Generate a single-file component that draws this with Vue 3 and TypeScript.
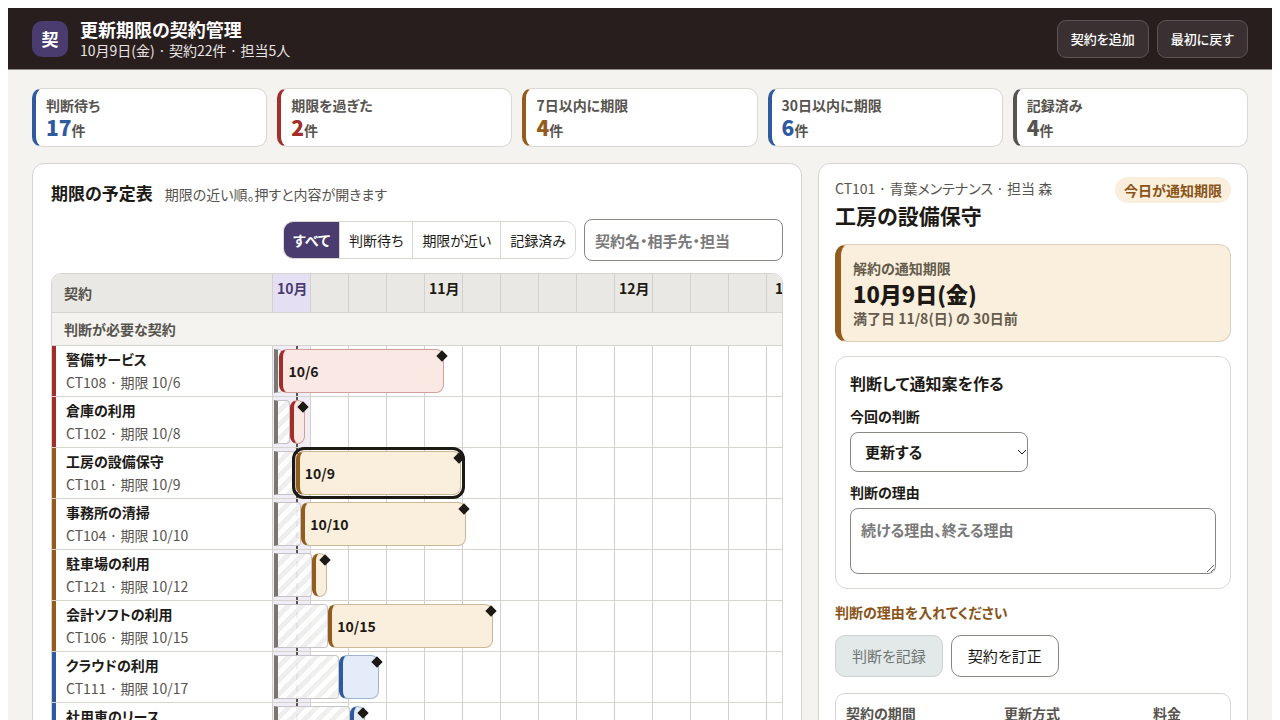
<script setup lang="ts">
import { ref, computed } from 'vue'

type Tone = 'blue' | 'red' | 'amber' | 'gray'

interface Contract {
  id: string
  name: string
  due: string
  start: number
  days: number
  tone: Tone
}

const DAY = 38 / 7

const stats: { label: string; count: number; tone: Tone }[] = [
  { label: '判断待ち', count: 17, tone: 'blue' },
  { label: '期限を過ぎた', count: 2, tone: 'red' },
  { label: '7日以内に期限', count: 4, tone: 'amber' },
  { label: '30日以内に期限', count: 6, tone: 'blue' },
  { label: '記録済み', count: 4, tone: 'gray' },
]

const filters = ['すべて', '判断待ち', '期限が近い', '記録済み']
const filter = ref('すべて')
const query = ref('')

// One entry per week, labelled where a new month begins.
const weeks = ['10月', '', '', '', '11月', '', '', '', '', '12月', '', '', '', '1月']

const contracts: Contract[] = [
  { id: 'CT108', name: '警備サービス', due: '10/6', start: 1, days: 30, tone: 'red' },
  { id: 'CT102', name: '倉庫の利用', due: '10/8', start: 3, days: 2, tone: 'red' },
  { id: 'CT101', name: '工房の設備保守', due: '10/9', start: 4, days: 30, tone: 'amber' },
  { id: 'CT104', name: '事務所の清掃', due: '10/10', start: 5, days: 30, tone: 'amber' },
  { id: 'CT121', name: '駐車場の利用', due: '10/12', start: 7, days: 1, tone: 'amber' },
  { id: 'CT106', name: '会計ソフトの利用', due: '10/15', start: 10, days: 30, tone: 'amber' },
  { id: 'CT111', name: 'クラウドの利用', due: '10/17', start: 12, days: 7, tone: 'blue' },
  { id: 'CT115', name: '社用車のリース', due: '10/19', start: 14, days: 1, tone: 'blue' },
]

const selected = ref('CT101')
const decision = ref('更新する')
const reason = ref('')

const shown = computed(() => contracts.filter((c) => (c.id + c.name).includes(query.value)))

function barStyle(c: Contract) {
  return { left: `${2 + c.start * DAY}px`, width: `${c.days * DAY + 2}px` }
}
function leadStyle(c: Contract) {
  return { width: `${c.start * DAY}px` }
}
</script>

<template>
  <div class="page">
    <header class="top">
      <div class="logo">契</div>
      <div class="brand">
        <h1>更新期限の契約管理</h1>
        <p>10月9日(金) · 契約22件 · 担当5人</p>
      </div>
      <button type="button" class="top-btn">契約を追加</button>
      <button type="button" class="top-btn">最初に戻す</button>
    </header>

    <section class="stats">
      <div v-for="s in stats" :key="s.label" class="stat" :class="s.tone">
        <div class="stat-label">{{ s.label }}</div>
        <div class="stat-value"><b>{{ s.count }}</b>件</div>
      </div>
    </section>

    <main class="main">
      <section class="panel schedule">
        <div class="heading">
          <h2>期限の予定表</h2>
          <span>期限の近い順。押すと内容が開きます</span>
        </div>
        <div class="tools">
          <div class="seg">
            <button
              v-for="f in filters"
              :key="f"
              type="button"
              :class="{ on: f === filter }"
              @click="filter = f"
            >{{ f }}</button>
          </div>
          <input v-model="query" class="field search" type="search" aria-label="契約を検索" placeholder="契約名・相手先・担当" />
        </div>

        <div class="timeline">
          <div class="row head">
            <div class="corner">契約</div>
            <div class="track">
              <div v-for="(w, i) in weeks" :key="i" class="week" :class="{ now: i === 0 }">{{ w }}</div>
            </div>
          </div>
          <div class="group">判断が必要な契約</div>
          <div v-for="c in shown" :key="c.id" class="row item" :class="c.tone">
            <button type="button" class="name" @click="selected = c.id">
              <strong>{{ c.name }}</strong>
              <span>{{ c.id }} · 期限 {{ c.due }}</span>
            </button>
            <div class="track">
              <div v-for="(w, i) in weeks" :key="i" class="week" :class="{ now: i === 0 }"></div>
              <div class="today"></div>
              <div class="lead" :style="leadStyle(c)"></div>
              <button
                type="button"
                class="bar"
                :class="{ sel: c.id === selected }"
                :style="barStyle(c)"
                :aria-label="c.name"
                @click="selected = c.id"
              >
                <span v-if="c.days > 10">{{ c.due }}</span>
                <i class="diamond"></i>
              </button>
            </div>
          </div>
        </div>
      </section>

      <aside class="panel detail">
        <div class="detail-head">
          <div>
            <p>CT101 · 青葉メンテナンス · 担当 森</p>
            <h2>工房の設備保守</h2>
          </div>
          <span class="pill">今日が通知期限</span>
        </div>

        <div class="notice">
          <div>解約の通知期限</div>
          <strong>10月9日(金)</strong>
          <div>満了日 11/8(日) の 30日前</div>
        </div>

        <div class="form">
          <h3>判断して通知案を作る</h3>
          <label for="decision">今回の判断</label>
          <div class="select-wrap">
            <select id="decision" v-model="decision" class="field">
              <option>更新する</option>
              <option>解約する</option>
            </select>
            <svg viewBox="0 0 10 6" aria-hidden="true"><path d="M1 1l4 4 4-4" /></svg>
          </div>
          <label for="reason">判断の理由</label>
          <textarea id="reason" v-model="reason" class="field" placeholder="続ける理由、終える理由"></textarea>
        </div>

        <p class="warn">判断の理由を入れてください</p>
        <div class="actions">
          <button type="button" disabled>判断を記録</button>
          <button type="button">契約を訂正</button>
        </div>

        <dl class="facts">
          <div><dt>契約の期間</dt><dd>11/8まで</dd></div>
          <div><dt>更新方式</dt><dd>自動更新</dd></div>
          <div><dt>料金</dt><dd>月額</dd></div>
        </dl>
      </aside>
    </main>
  </div>
</template>

<style>
body {
  margin: 8px;
  background: #fff;
}
</style>

<style scoped>
* {
  box-sizing: border-box;
}
.page {
  background: #f4f3ef;
  color: #1d1a16;
  font-family: 'Noto Sans CJK JP', sans-serif;
  font-size: 15px;
  line-height: 22px;
  font-feature-settings: 'palt';
  padding-bottom: 24px;
}
h1, h2, h3, p, dl, dd {
  margin: 0;
}
button, input, select, textarea {
  font: inherit;
  font-feature-settings: inherit;
  color: inherit;
}
.top {
  display: flex;
  align-items: center;
  gap: 8px;
  min-height: 62px;
  padding: 0 24px;
  background: #281e1e;
  border-bottom: 1px solid #8f8a86;
  color: #fff;
}
.logo {
  width: 36px;
  height: 36px;
  border-radius: 10px;
  background: #4a3c6e;
  font-size: 17px;
  line-height: 36px;
  font-weight: 700;
  text-align: center;
}
.brand {
  flex: 1;
  margin-left: 4px;
}
.brand h1 {
  font-size: 18px;
  line-height: 22px;
}
.brand p {
  font-size: 14px;
  line-height: 20px;
  color: #e9e4e2;
}
.top-btn {
  height: 38px;
  padding: 0 13px;
  border: 1px solid #5d5352;
  border-radius: 9px;
  background: #3a3031;
  font-size: 13px;
  font-weight: 500;
}
.stats {
  display: grid;
  grid-template-columns: repeat(5, 1fr);
  gap: 10px;
  padding: 18px 24px 16px;
}
.stat {
  padding: 6px 10px 4px;
  min-height: 59px;
  background: #fff;
  border: 1px solid #dad8d3;
  border-left: 4px solid var(--line);
  border-radius: 10px;
  font-size: 14px;
  line-height: 20px;
  font-weight: 700;
  color: #57534e;
}
.stat-value {
  line-height: 24px;
}
.stat b {
  font-size: 21px;
  color: var(--line);
}
.blue { --line: #2f5a9e; --fill: #e4ecf9; --edge: #9fb2d2; }
.red { --line: #a32d28; --fill: #fae8e4; --edge: #d0a09b; }
.amber { --line: #935c1c; --fill: #faefdc; --edge: #c9b797; }
.gray { --line: #57544f; }
.main {
  display: grid;
  grid-template-columns: minmax(0, 1fr) 430px;
  align-items: start;
  gap: 16px;
  padding: 0 24px;
}
.panel {
  background: #fff;
  border: 1px solid #d6d4ce;
  border-radius: 12px;
}
.schedule {
  padding: 17px 18px 18px;
}
.heading {
  display: flex;
  align-items: baseline;
  gap: 12px;
}
.heading h2 {
  font-size: 17px;
  line-height: 24px;
}
.heading span {
  font-size: 14px;
  color: #57534e;
}
.tools {
  display: flex;
  justify-content: flex-end;
  align-items: center;
  gap: 8px;
  margin: 14px 0 12px;
}
.seg {
  display: flex;
  height: 38px;
  border: 1px solid #d9d7d2;
  border-radius: 10px;
  overflow: hidden;
}
.seg button {
  padding: 0 9px;
  border: 0;
  border-left: 1px solid #d9d7d2;
  background: #fff;
  font-size: 14px;
}
.seg button:first-child {
  border-left: 0;
}
.seg .on {
  background: #4a3c6e;
  color: #fff;
  font-weight: 700;
}
.field {
  border: 1px solid #8b8884;
  border-radius: 8px;
  background: #fff;
  font-size: 15px;
  font-weight: 700;
  padding: 0 10px;
}
.field::placeholder {
  color: #7a7a7a;
  opacity: 1;
}
.search {
  width: 199px;
  height: 42px;
  appearance: none;
}
.timeline {
  border: 1px solid #d6d4ce;
  border-radius: 10px;
  overflow: hidden;
}
.row {
  display: grid;
  grid-template-columns: 220px minmax(0, 1fr);
  border-bottom: 1px solid #d6d4ce;
}
.head {
  background: #e9e8e4;
  min-height: 39px;
}
.corner {
  padding: 0 12px;
  line-height: 38px;
  font-size: 14px;
  font-weight: 700;
  color: #57534e;
}
.track {
  position: relative;
  display: flex;
}
.week {
  flex: 0 0 38px;
  border-left: 1px solid #d3d1cc;
  padding-left: 4px;
  line-height: 28px;
  font-size: 14px;
  font-weight: 700;
  white-space: nowrap;
}
.head .week:last-child {
  padding-left: 8px;
}
.head .now {
  background: #e4dff2;
  color: #4a3c6e;
}
.group {
  padding: 0 12px;
  line-height: 32px;
  background: #f4f3ef;
  border-bottom: 1px solid #d6d4ce;
  font-size: 14px;
  font-weight: 700;
  color: #57534e;
}
.item {
  min-height: 51px;
}
.item .now {
  background: #f0edf7;
}
.name {
  display: flex;
  flex-direction: column;
  padding: 2px 10px 1px;
  border: 0;
  border-left: 4px solid var(--line);
  background: #fff;
  font-size: 14px;
  text-align: left;
}
.name span {
  color: #57534e;
  line-height: 24px;
}
.today {
  position: absolute;
  left: 24px;
  top: 0;
  bottom: 0;
  border-left: 2px dashed #57534e;
}
.lead {
  position: absolute;
  left: 2px;
  top: 3px;
  height: 44px;
  min-width: 8px;
  border: 1px solid #c4c1c4;
  border-left: 4px solid #706c69;
  border-radius: 0 4px 4px 0;
  background: repeating-linear-gradient(135deg, #fff 0 5px, #efefee 5px 10px);
  opacity: 0.92;
}
.bar {
  position: absolute;
  top: 3px;
  height: 44px;
  min-width: 14px;
  padding: 0 5px;
  border: 1px solid var(--edge);
  border-left: 4px solid var(--line);
  border-radius: 8px;
  background: var(--fill);
  font-size: 14px;
  font-weight: 700;
  text-align: left;
}
.sel {
  z-index: 1;
  outline: 3px solid #1d1a16;
  outline-offset: 1px;
}
.diamond {
  position: absolute;
  top: 2px;
  right: -3px;
  width: 8px;
  height: 8px;
  background: #1d1a16;
  transform: rotate(45deg);
}
.detail {
  padding: 13px 16px;
}
.detail-head {
  display: flex;
  justify-content: space-between;
  align-items: flex-start;
}
.detail-head p {
  font-size: 14px;
  color: #57534e;
}
.detail-head h2 {
  font-size: 21px;
  line-height: 32px;
}
.pill {
  padding: 2px 9px;
  border-radius: 13px;
  background: #faefdc;
  color: #8a5418;
  font-size: 14px;
  font-weight: 700;
}
.notice {
  margin-top: 13px;
  padding: 12px;
  border: 1px solid #d9cfbd;
  border-left: 6px solid #935c1c;
  border-radius: 12px;
  background: #faefdc;
  color: #655c4e;
  font-size: 14px;
  font-weight: 700;
}
.notice strong {
  display: block;
  font-size: 22px;
  line-height: 28px;
  color: #1d1a16;
}
.form {
  display: flex;
  flex-direction: column;
  align-items: flex-start;
  margin-top: 14px;
  padding: 14px;
  border: 1px solid #dad8d3;
  border-radius: 12px;
}
.form h3 {
  font-size: 16px;
  line-height: 24px;
  margin-bottom: 11px;
}
.form label {
  font-size: 14px;
  line-height: 20px;
  font-weight: 700;
  margin-bottom: 6px;
}
.select-wrap {
  position: relative;
  width: 178px;
  margin-bottom: 10px;
}
.select-wrap select {
  display: block;
  width: 100%;
  height: 40px;
  padding: 0 14px;
  appearance: none;
}
.select-wrap svg {
  position: absolute;
  right: 1px;
  top: 17px;
  width: 10px;
  height: 6px;
  fill: none;
  stroke: #1d1a16;
}
.form textarea {
  display: block;
  width: 100%;
  height: 66px;
  padding: 10px;
  resize: vertical;
}
.warn {
  margin-top: 12px;
  font-size: 14px;
  font-weight: 700;
  color: #8a5418;
}
.actions {
  display: flex;
  gap: 8px;
  margin-top: 12px;
}
.actions button {
  height: 42px;
  padding: 0 16px;
  border: 1px solid #8b8884;
  border-radius: 10px;
  background: #fff;
}
.actions button:disabled {
  border-color: #cdd3d1;
  background: #e3e8e8;
  color: #6f7674;
}
.facts {
  display: grid;
  grid-template-columns: 158px 149px 1fr;
  margin-top: 16px;
  padding: 8px 10px;
  border: 1px solid #d6d4ce;
  border-radius: 10px;
  font-size: 14px;
}
.facts dt {
  font-weight: 700;
  color: #57534e;
}
</style>
